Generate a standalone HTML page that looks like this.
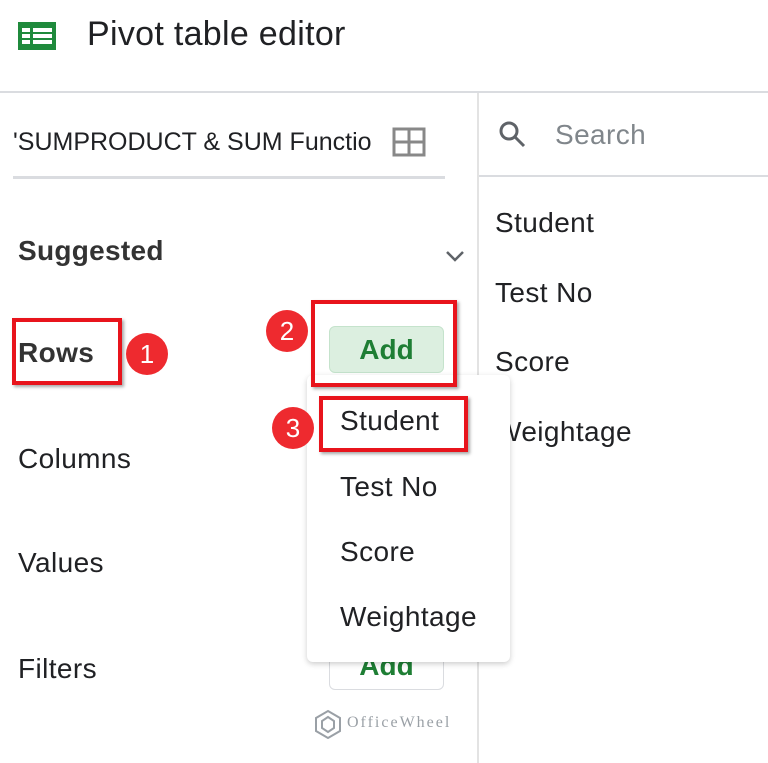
<!DOCTYPE html>
<html><head><style>
*{margin:0;padding:0;box-sizing:border-box}
body{width:768px;height:763px;background:#fff;font-family:"Liberation Sans",Arial,sans-serif;color:#202124;position:relative;overflow:hidden}
.a{position:absolute;white-space:nowrap}
.l{font-size:28px;line-height:30px;letter-spacing:.4px}
.rb{position:absolute;border:4px solid #e8141c;box-shadow:2px 2px 3px rgba(0,0,0,.35)}
.c{position:absolute;width:42px;height:42px;border-radius:50%;background:#ee2a2f;color:#fff;font-size:26px;line-height:42px;text-align:center}
</style></head><body>
<svg class="a" style="left:18px;top:22px" width="40" height="28" viewBox="0 0 40 28"><rect width="38" height="28" fill="#1f8a3c"/><rect x="4" y="6" width="8" height="4" fill="#fff"/><rect x="15" y="6" width="19" height="4" fill="#fff"/><rect x="4" y="12" width="8" height="4" fill="#fff"/><rect x="15" y="12" width="19" height="4" fill="#fff"/><rect x="4" y="18" width="8" height="4" fill="#fff"/><rect x="15" y="18" width="19" height="4" fill="#fff"/></svg>
<div class="a" style="left:87px;top:14px;font-size:34px;line-height:40px;letter-spacing:.3px">Pivot table editor</div>
<div class="a" style="left:0;top:91px;width:768px;height:2px;background:#dadce0"></div>
<div class="a" style="left:477px;top:93px;width:2px;height:670px;background:#e3e3e3"></div>
<div class="a" style="left:13px;top:127px;font-size:25px;line-height:30px">'SUMPRODUCT &amp; SUM Functio</div>
<svg class="a" style="left:392px;top:127px" width="34" height="30"><rect x="2" y="2" width="30" height="26" fill="none" stroke="#888" stroke-width="3"/><line x1="17" y1="2" x2="17" y2="28" stroke="#888" stroke-width="3"/><line x1="2" y1="15" x2="32" y2="15" stroke="#888" stroke-width="3"/></svg>
<div class="a" style="left:13px;top:176px;width:432px;height:3px;background:#dadce0"></div>
<svg class="a" style="left:498px;top:120px" width="30" height="30"><circle cx="11" cy="11" r="8" fill="none" stroke="#5f6368" stroke-width="3"/><line x1="17" y1="17" x2="26" y2="26" stroke="#5f6368" stroke-width="3"/></svg>
<div class="a l" style="left:555px;top:120px;color:#80868b">Search</div>
<div class="a" style="left:479px;top:175px;width:289px;height:2px;background:#dadce0"></div>
<div class="a l" style="left:18px;top:236px;font-weight:bold;color:#333;letter-spacing:.3px">Suggested</div>
<svg class="a" style="left:445px;top:249px" width="20" height="14"><path d="M2 3 L10 11 L18 3" fill="none" stroke="#5f6368" stroke-width="2.5"/></svg>
<div class="a l" style="left:18px;top:338px;font-weight:bold;color:#333">Rows</div>
<div class="a l" style="left:18px;top:444px">Columns</div>
<div class="a l" style="left:18px;top:548px">Values</div>
<div class="a l" style="left:18px;top:654px">Filters</div>
<div class="a l" style="left:495px;top:208px">Student</div>
<div class="a l" style="left:495px;top:278px">Test No</div>
<div class="a l" style="left:495px;top:347px">Score</div>
<div class="a l" style="left:495px;top:417px">Weightage</div>
<div class="a" style="left:329px;top:326px;width:115px;height:47px;background:#dcefe0;border:1px solid #c5e3cc;border-radius:6px;color:#1e7e34;font-size:28px;font-weight:bold;line-height:45px;text-align:center">Add</div>
<div class="a" style="left:329px;top:640px;width:115px;height:50px;border:1px solid #dadce0;border-radius:6px;color:#1e7e34;font-size:28px;font-weight:bold;line-height:50px;text-align:center">Add</div>
<div class="a" style="left:307px;top:375px;width:203px;height:287px;background:#fff;border-radius:6px;box-shadow:0 2px 6px rgba(0,0,0,.2)"></div>
<div class="a l" style="left:340px;top:406px">Student</div>
<div class="a l" style="left:340px;top:472px">Test No</div>
<div class="a l" style="left:340px;top:537px">Score</div>
<div class="a l" style="left:340px;top:602px">Weightage</div>
<div class="rb" style="left:12px;top:318px;width:110px;height:67px"></div>
<div class="rb" style="left:311px;top:300px;width:146px;height:87px"></div>
<div class="rb" style="left:319px;top:396px;width:149px;height:56px"></div>
<div class="c" style="left:126px;top:333px">1</div>
<div class="c" style="left:266px;top:310px">2</div>
<div class="c" style="left:272px;top:407px">3</div>
<svg class="a" style="left:313px;top:709px" width="30" height="30"><path d="M15 2 L27 9 L27 22 L15 29 L3 22 L3 9 Z" fill="none" stroke="#9aa0a6" stroke-width="2"/><path d="M15 8 L21 12 L21 19 L15 23 L9 19 L9 12 Z" fill="none" stroke="#9aa0a6" stroke-width="2"/></svg>
<div class="a" style="left:347px;top:714px;font-family:'Liberation Serif',serif;font-size:16px;letter-spacing:2px;color:#9aa0a6">OfficeWheel</div>
</body></html>
